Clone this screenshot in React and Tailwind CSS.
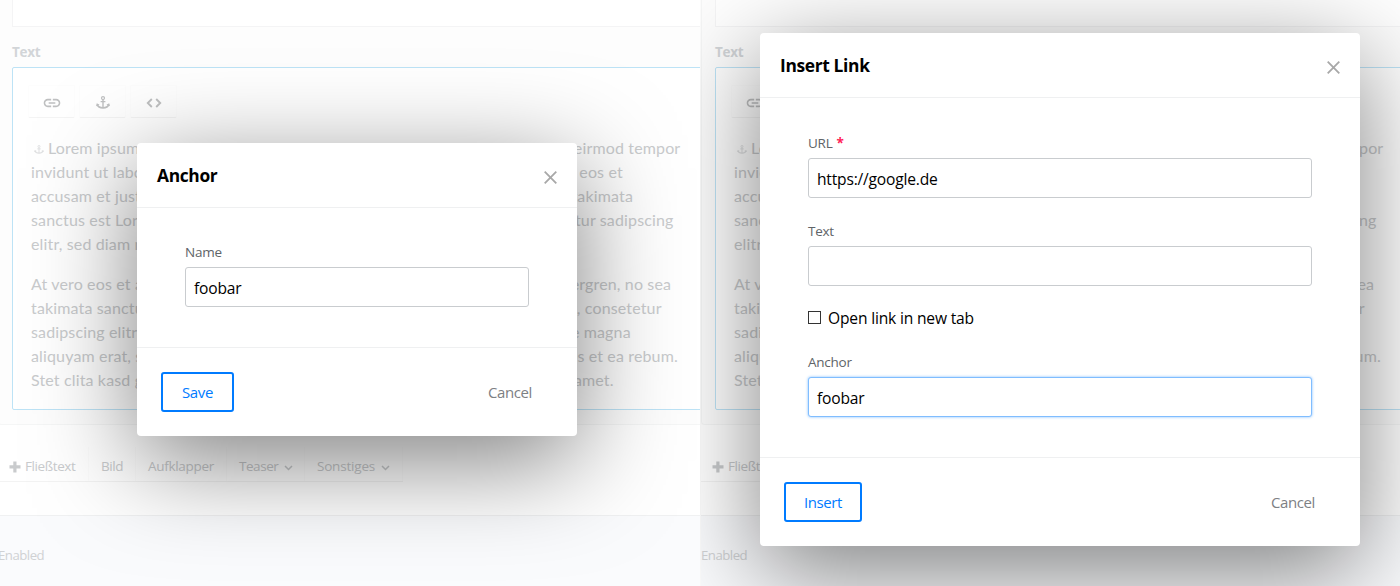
import { MdLink } from 'react-icons/md';

const paragraphs = [
  [
    'Lorem ipsum dolor sit amet, consetetur sadipscing elitr, sed diam nonumy eirmod tempor',
    'invidunt ut labore et dolore magna aliquyam erat, sed diam voluptua. At vero eos et',
    'accusam et justo duo dolores et ea rebum. Stet clita kasd gubergren, no sea takimata',
    'sanctus est Lorem ipsum dolor sit amet. Lorem ipsum dolor sit amet, consetetur sadipscing',
    'elitr, sed diam nonumy eirmod tempor.',
  ],
  [
    'At vero eos et accusam et justo duo dolores et ea rebum. Stet clita kasd gubergren, no sea',
    'takimata sanctus est Lorem ipsum dolor sit amet. Lorem ipsum dolor sit amet, consetetur',
    'sadipscing elitr, sed diam nonumy eirmod tempor invidunt ut labore et dolore magna',
    'aliquyam erat, sed diam voluptua. At vero eos et accusam et justo duo dolores et ea rebum.',
    'Stet clita kasd gubergren, no sea takimata sanctus est Lorem ipsum dolor sit amet.',
  ],
];

function AnchorIcon({ className }) {
  return (
    <svg className={className} viewBox="0 0 14 13" fill="none" stroke="currentColor">
      <circle cx="7" cy="2.1" r="1.5" strokeWidth="1.2" />
      <path d="M7 3.6V11.5M4.6 5.6h4.8" strokeWidth="1.4" />
      <path d="M1.3 8.4C2 10.8 4.2 11.7 7 11.8C9.8 11.7 12 10.8 12.7 8.4" strokeWidth="1.7" />
      <path d="M0 10.2L.8 7.2L3.6 8.8ZM14 10.2L13.2 7.2L10.4 8.8Z" fill="currentColor" stroke="none" />
    </svg>
  );
}

function CodeIcon() {
  return (
    <svg className="h-[10px] w-[16px]" viewBox="0 0 16 10" fill="none" stroke="currentColor" strokeWidth="1.9">
      <path d="M5.8 1L1.8 5l4 4M10.2 1l4 4l-4 4" />
    </svg>
  );
}

function Chevron() {
  return (
    <svg className="ml-[6px] mt-[2px] h-[6px] w-[9px]" viewBox="0 0 9 6" fill="none" stroke="currentColor" strokeWidth="1.5">
      <path d="M1 1l3.5 3.5L8 1" />
    </svg>
  );
}

function ToolButton({ children }) {
  return (
    <div className="flex h-[33px] w-[47px] items-center justify-center rounded-xs border border-[#fdfdfd] border-b-[#f4f4f4] pt-[2px] text-[#bfc0c1]">
      {children}
    </div>
  );
}

function BarItem({ className, children }) {
  return <div className={`flex h-full items-center border-r border-[#fcfcfc] pt-[5px] ${className}`}>{children}</div>;
}

function Editor({ className }) {
  return (
    <div className={`flex w-[760px] flex-col text-[#c9cbcd] ${className}`}>
      <div className="h-[425px] rounded-bl-sm border-b border-l border-[#f5f6f6] bg-[#fdfdfd] pl-[13px]">
        <div className="h-[27px] border-b border-l border-[#f4f4f5] bg-white" />
        <div className="flex h-[40px] items-center pt-[11px] text-[13.5px] font-bold tracking-[-0.3px] text-[#d2d5d8]">Text</div>
        <div className="flex h-[343px] flex-col rounded-[2px] border border-[#bde3f6] bg-white px-[15px] pt-[17px]">
          <div className="flex gap-[4px]">
            <ToolButton><MdLink className="size-[20px]" /></ToolButton>
            <ToolButton><AnchorIcon className="mb-px h-[13px] w-[14px]" /></ToolButton>
            <ToolButton><CodeIcon /></ToolButton>
          </div>
          <div className="ml-[3px] mt-[18px] flex flex-col gap-4 font-['Lato',sans-serif] text-base tracking-[0.145px]">
            {paragraphs.map((lines, p) => (
              <div key={p}>
                {lines.map((line, i) => (
                  <p key={i} className="flex items-center whitespace-nowrap">
                    {p === 0 && i === 0 && <AnchorIcon className="ml-[3px] mr-[4px] mt-[2px] h-[9px] w-[10px] opacity-60" />}
                    {line}
                  </p>
                ))}
              </div>
            ))}
          </div>
        </div>
      </div>
      <div className="flex h-[91px] border-b border-[#f0f1f2] bg-white pt-[22px] text-[13.5px] tracking-[-0.3px]">
        <div className="flex h-[35px] border-b border-[#f3f3f3]">
          <BarItem className="w-[91px] pl-[11px]">
            <svg className="mr-[4px] size-[12px] shrink-0" viewBox="0 0 12 12" fill="currentColor">
              <path d="M4.3 0.5h3.2v3.8h4v3.2h-4v4h-3.2v-4h-3.8v-3.2h3.8z" />
            </svg>
            <span className="tracking-[-0.4px]">Fließtext</span>
          </BarItem>
          <BarItem className="w-[47px] pl-[12px] tracking-[-0.4px]">Bild</BarItem>
          <BarItem className="w-[91px] pl-[12px]">Aufklapper</BarItem>
          <BarItem className="w-[78px] pl-[12px] tracking-[-0.45px]">Teaser<Chevron /></BarItem>
          <BarItem className="w-[98px] pl-[12px] tracking-[-0.2px]">Sonstiges<Chevron /></BarItem>
        </div>
      </div>
      <div className="h-[70px] bg-[#fafbfd] pt-[29px] text-[13.2px] leading-5 tracking-[-0.5px] text-[#d0d2d4]">Enabled</div>
    </div>
  );
}

function Field({ label, value, required, focused, className }) {
  return (
    <div className={className}>
      <div className={`text-[13.5px] leading-6 tracking-[-0.25px] text-[#606468] ${required ? 'h-[28px] pt-px' : 'h-[27px]'}`}>
        {label}
        {required && <span className="ml-[4px] font-bold text-[#ff2257]">*</span>}
      </div>
      <div
        className={`flex h-10 items-center rounded-[3px] border bg-white px-2 pt-[4px] text-[15.6px] tracking-[-0.2px] text-black ${
          focused ? 'border-[#80bdff] shadow-[0_0_3px_#80bdff]' : 'border-[#c9cccf]'
        }`}
      >
        {value}
      </div>
    </div>
  );
}

function Dialog({ title, action, className, actionClass, children }) {
  return (
    <div className={`absolute rounded-[4px] bg-white shadow-[0_25px_100px_rgba(0,0,0,0.5)] ${className}`}>
      <div className="flex h-[65px] items-center justify-between border-b border-[#eff0f1] px-5">
        <h2 className="text-[17.4px] font-bold tracking-[-0.35px] text-black">{title}</h2>
        <svg className="mt-[5px] size-[13px]" viewBox="0 0 13 13" stroke="#a8a8a8" strokeWidth="1.8">
          <path d="M.7.7l11.6 11.6M12.3.7L.7 12.3" />
        </svg>
      </div>
      <div className="px-12 pb-10 pt-8">{children}</div>
      <div className="flex items-center justify-between border-t border-[#eff0f1] py-6 pl-6 pr-[45px] text-[15px] tracking-[-0.4px]">
        <div className={`flex h-10 items-center justify-center rounded-[3px] border-2 border-[#007bff] text-[#007bff] ${actionClass}`}>
          {action}
        </div>
        <div className="text-[#7d8084]">Cancel</div>
      </div>
    </div>
  );
}

export default function App() {
  return (
    <div className="flex h-[586px] w-[1400px] overflow-hidden bg-white font-['Open_Sans',sans-serif]">
      <div className="relative w-[700px] overflow-hidden">
        <Editor className="-ml-[2px]" />
        <Dialog title="Anchor" action="Save" className="left-[137px] top-[143px] w-[440px]" actionClass="w-[73px]">
          <Field label="Name" value="foobar" />
        </Dialog>
      </div>
      <div className="relative w-[700px] overflow-hidden bg-[#fdfdfd]">
        <Editor className="ml-px" />
        <Dialog title="Insert Link" action="Insert" className="left-[60px] top-[33px] w-[600px]" actionClass="w-[78px]">
          <Field label="URL" value="https://google.de" required />
          <Field label="Text" value="" className="mt-[21px]" />
          <div className="mt-5 flex h-[23px] items-center text-[15.6px] tracking-[-0.18px] text-black">
            <span className="mr-[7px] size-[13px] border border-[#333]" />
            <span className="pt-[3px]">Open link in new tab</span>
          </div>
          <Field label="Anchor" value="foobar" focused className="mt-[21px]" />
        </Dialog>
      </div>
    </div>
  );
}
